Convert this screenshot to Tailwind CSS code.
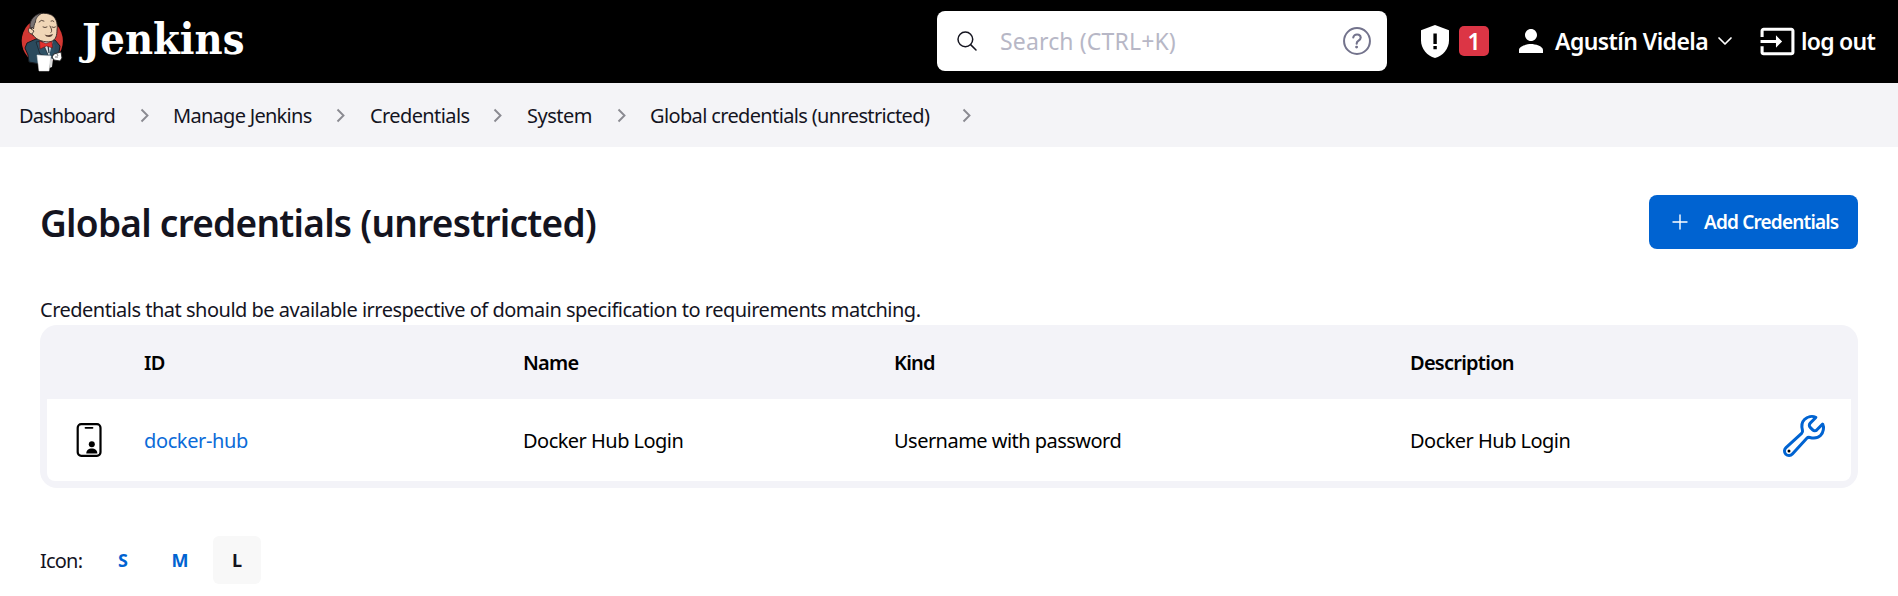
<!DOCTYPE html>
<html lang="en">
<head>
<meta charset="utf-8">
<title>Global credentials (unrestricted) [Jenkins]</title>
<script src="https://cdn.jsdelivr.net/npm/@tailwindcss/browser@4"></script>
</head>
<body class="h-[596px] overflow-hidden bg-white font-['Noto_Sans',sans-serif] text-[20px] leading-7 text-[#14141f]">
<header class="flex h-[83px] items-center bg-black pl-[20px] text-[23px] font-semibold text-white">
  <a class="flex w-[917px] items-center">
    <svg class="mb-[2px] h-[62px] w-[44px] shrink-0" viewBox="0 0 44 62">
      <ellipse cx="22.3" cy="31" rx="20.6" ry="22.500" fill="#d33833"/>
      <path d="M7 33 L16 29 L35 30 L40 36 L38 48 L31 50 L31 56 L9 52 L8 45 L5 38Z" fill="#2b4a5d" stroke="#171b20" stroke-width="1"/>
      <path d="M20 30 L32 30 L34 41 L29 47 L22 41Z" fill="#d6e1e6"/>
      <path d="M22 31 L29 47 L20 44 L16 32Z" fill="#2f5266" stroke="#182028" stroke-width=".7"/>
      <path d="M32 33 L35 35 L34 43 L29 47Z" fill="#2f5266"/>
      <path d="M28 35 L29 43" stroke="#243744" stroke-width="1.2"/>
      <path d="M12 12 C14 4 22 2 29 4 C36 6 38 13 37 20 C37 25 36 30 31 31.500 C25 33 16 30 13 25 C10 24 10 18 12 17Z" fill="#f0d6b7" stroke="#2b2523" stroke-width=".9"/>
      <path d="M19.500 31 L26 33.500 L32 31.500 L32.500 38 L26.500 36 L20 39Z" fill="#e2312e" stroke="#591a1d" stroke-width=".6"/>
      <path d="M11 20 C8 13 12 5 22 3 C17 6 15.500 9 15.500 12 C14 14 14 17 13.500 19 L12 17Z" fill="#777273" stroke="#292525" stroke-width=".8"/>
      <path d="M10 18 C7.500 18 8 24 12 24 L14 21Z" fill="#f0d6b7" stroke="#2b2523" stroke-width=".8"/>
      <path d="M19 12q2-3 5-1M31 11q2-1 3 .5M23 17q2 1.200 4 0M32 17q2 1.200 3.500 0M30 16q3 5 1 6.500" fill="none" stroke="#4a382e" stroke-width=".9" stroke-linecap="round"/>
      <path d="M24.500 24.500q4 1.500 8.500-.5q-1 3-4 3q-3 0-4.500-2.500" fill="#5a4034"/>
      <path d="M34 44 L41 42 L42 48 L40 51 L34 50 L32 47Z" fill="#fff" stroke="#222" stroke-width=".9"/>
      <path d="M35 47h3M37 44l1 2" stroke="#555" stroke-width=".8"/>
      <path d="M17 45 L31 46 L29 61 L19 61Z" fill="#fff" stroke="#ddd" stroke-width=".5"/>
      <path d="M30 48 L33 49 L32 57 L29.500 58Z" fill="#d9d9d9"/>
    </svg>
    <span class="ml-[18px] mt-[-4px] font-['DejaVu_Serif',serif] text-[43px] leading-none font-bold font-stretch-condensed">Jenkins</span>
  </a>
  <div class="mb-px flex h-[60px] w-[450px] items-center rounded-[8px] bg-white px-[13px] font-normal text-[#b7b7c6]">
    <svg class="ml-[5px] size-[24px]" viewBox="0 0 512 512" fill="none" stroke="#14141f" stroke-width="32" stroke-linecap="round"><circle cx="221" cy="221" r="157"/><path d="M338.300 338.300 448 448"/></svg>
    <span class="ml-[21px] flex-1 whitespace-nowrap tracking-[0.15px]">Search (CTRL+K)</span>
    <svg class="size-[34px]" viewBox="0 0 512 512" fill="none" stroke="#73738c" stroke-linecap="round"><circle cx="256" cy="256" r="195" stroke-width="30"/><path stroke-width="32" d="M200 202.290s.84-17.500 19.570-32.570C230.680 160.770 244 158.180 256 158c10.930-.14 20.690 1.670 26.530 4.450 10 4.760 29.470 16.380 29.470 41.090 0 26-17 37.810-36.370 50.800S251 281.430 251 296"/><circle cx="250" cy="348" r="22" fill="#73738c" stroke="none"/></svg>
  </div>
  <div class="mb-px ml-[34px] flex items-center gap-[10px]">
    <svg class="h-[33px] w-[28px]" viewBox="0 0 28 33"><path d="M14 0 28 5.200V15.500c0 8-6 15.500-14 17.500C6 31 0 23.500 0 15.500V5.200Z" fill="#fff"/><path d="M12.400 8.500h3.400v10.500h-3.400zM12.400 21h3.400v3.200h-3.400z" fill="#000"/></svg>
    <span class="flex size-[30px] items-center justify-center rounded-[5px] bg-[#dc3545] text-[23px]">1</span>
  </div>
  <div class="mb-px ml-[24px] flex items-center">
    <svg class="size-[36px]" viewBox="0 0 24 24" fill="#fff"><path d="M12 12c2.210 0 4-1.790 4-4s-1.790-4-4-4-4 1.790-4 4 1.790 4 4 4zm0 2c-2.670 0-8 1.340-8 4v2h16v-2c0-2.660-5.330-4-8-4z"/></svg>
    <span class="ml-[6px] w-[154px] whitespace-nowrap tracking-[-0.58px]">Agustín Videla</span>
    <svg class="ml-[8px] h-[10px] w-[16px]" viewBox="0 0 16 10" fill="none" stroke="#fff" stroke-width="1.700" stroke-linecap="round" stroke-linejoin="round"><path d="m2 2 6 6 6-6"/></svg>
  </div>
  <div class="mb-px ml-[26px] flex items-center">
    <svg class="size-[37px]" viewBox="0 0 24 24" fill="#fff"><path d="M21 3.010H3c-1.100 0-2 .9-2 2V9h2V4.990h18v14.030H3V15H1v4.010c0 1.100.9 1.980 2 1.980h18c1.100 0 2-.88 2-1.980v-14c0-1.110-.9-2-2-2zM11 16l4-4-4-4v3H1v2h10v3z"/></svg>
    <span class="ml-[5px] whitespace-nowrap tracking-[-0.75px]">log out</span>
  </div>
</header>

<nav class="flex h-[64px] items-center bg-[#f4f4f7] pt-px pl-[19px] whitespace-nowrap">
  <span class="w-[121px] pt-px tracking-[-0.85px]">Dashboard</span>
  <svg class="mr-[24px] h-[15px] w-[9px]" viewBox="0 0 9 15" fill="none" stroke="#8a8a91" stroke-width="1.900"><path d="m1.500 1.500 6 6-6 6"/></svg>
  <span class="w-[163px] pt-px tracking-[-0.72px]">Manage Jenkins</span>
  <svg class="mr-[25px] h-[15px] w-[9px]" viewBox="0 0 9 15" fill="none" stroke="#8a8a91" stroke-width="1.900"><path d="m1.500 1.500 6 6-6 6"/></svg>
  <span class="w-[123px] pt-px tracking-[-0.6px]">Credentials</span>
  <svg class="mr-[25px] h-[15px] w-[9px]" viewBox="0 0 9 15" fill="none" stroke="#8a8a91" stroke-width="1.900"><path d="m1.500 1.500 6 6-6 6"/></svg>
  <span class="w-[90px] pt-px tracking-[-0.5px]">System</span>
  <svg class="mr-[24px] h-[15px] w-[9px]" viewBox="0 0 9 15" fill="none" stroke="#8a8a91" stroke-width="1.900"><path d="m1.500 1.500 6 6-6 6"/></svg>
  <span class="w-[312px] pt-px tracking-[-0.64px]">Global credentials (unrestricted)</span>
  <svg class="h-[15px] w-[9px]" viewBox="0 0 9 15" fill="none" stroke="#8a8a91" stroke-width="1.900"><path d="m1.500 1.500 6 6-6 6"/></svg>
</nav>

<main class="px-[40px] pt-[48px]">
  <div class="flex h-[54px] items-center justify-between">
    <h1 class="pt-px text-[37px] leading-none font-semibold tracking-[-0.75px] whitespace-nowrap">Global credentials (unrestricted)</h1>
    <button class="flex h-[54px] w-[209px] items-center rounded-[8px] bg-[#0063d1] pl-[23px] text-[19px] font-semibold tracking-[-0.82px] whitespace-nowrap text-white">
      <svg class="size-[16px]" viewBox="0 0 16 16" stroke="#fff" stroke-width="1.400" stroke-linecap="round"><path d="M8 1v14M1 8h14"/></svg>
      <span class="ml-[16px]">Add Credentials</span>
    </button>
  </div>
  <p class="mt-[47px] h-[29px] whitespace-nowrap tracking-[-0.5px]">Credentials that should be available irrespective of domain specification to requirements matching.</p>

  <section class="h-[163px] rounded-[17px] bg-[#f3f3f8] px-[7px] text-black">
    <div class="grid h-[74px] grid-cols-[97px_379px_371px_516px_1fr] items-center pt-[2px] font-semibold tracking-[-0.75px]">
      <span></span><span>ID</span><span>Name</span><span>Kind</span><span>Description</span>
    </div>
    <div class="grid h-[82px] grid-cols-[97px_379px_371px_516px_1fr] items-center rounded-b-[8px] bg-white tracking-[-0.53px]">
      <svg class="ml-[29px] h-[34px] w-[26px]" viewBox="0 0 26 34"><rect x="1.700" y="1.200" width="22.800" height="31.600" rx="3.500" fill="none" stroke="#000" stroke-width="2.200"/><path d="M9.500 4.800h7" stroke="#000" stroke-width="1.800" stroke-linecap="round"/><circle cx="15.800" cy="21.200" r="3" fill="#000"/><path d="M10.300 30.500c0-3.200 2.300-5 5.500-5s5.500 1.800 5.500 5z" fill="#000"/></svg>
      <a class="pt-[2px] tracking-[-0.38px] text-[#0b6bd8]">docker-hub</a>
      <span class="pt-[2px]">Docker Hub Login</span>
      <span class="pt-[2px]">Username with password</span>
      <div class="flex items-center justify-between pr-[23px]">
        <span class="pt-[2px]">Docker Hub Login</span>
        <svg class="mb-[8px] size-[48px]" viewBox="0 0 512 512"><path fill="none" stroke="#0063d1" stroke-width="32" stroke-miterlimit="10" d="M393.870 190a32.100 32.100 0 01-45.250 0l-26.570-26.570a32.090 32.090 0 010-45.260L382.190 58a1 1 0 00-.3-1.640c-38.820-16.640-89.150-8.160-121.110 23.570-30.580 30.350-32.320 76-21.120 115.840a31.930 31.930 0 01-9.060 32.080L64 380a48.170 48.170 0 1068 68l153.860-167a31.930 31.930 0 0131.600-9.130c39.540 10.590 84.540 8.600 114.720-21.190 32.490-32 39.500-88.560 23.750-120.930a1 1 0 00-1.600-.26z"/><circle cx="96" cy="416" r="16" fill="#000"/></svg>
      </div>
    </div>
  </section>

  <div class="mt-[48px] flex h-[48px] items-center gap-[9px]">
    <span class="w-[50px] pt-px tracking-[-0.8px]">Icon:</span>
    <a class="flex size-[48px] items-center justify-center text-[18px] font-bold text-[#0063d1]">S</a>
    <a class="flex size-[48px] items-center justify-center text-[18px] font-bold text-[#0063d1]">M</a>
    <a class="flex size-[48px] items-center justify-center rounded-[6px] bg-[#f8f8f8] text-[18px] font-bold">L</a>
  </div>
</main>
</body>
</html>
